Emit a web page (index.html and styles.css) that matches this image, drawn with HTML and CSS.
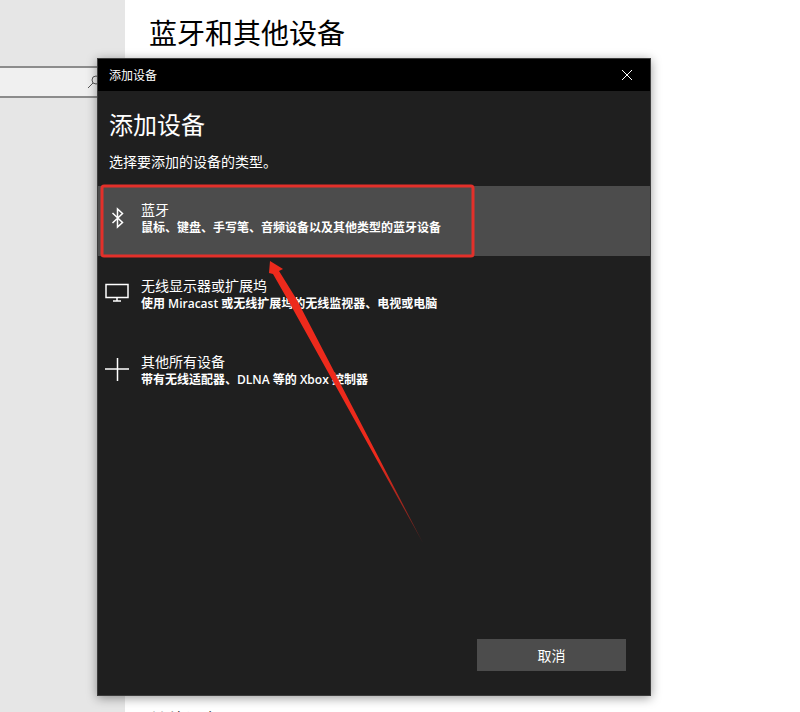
FILE: index.html
```html
<!DOCTYPE html>
<html lang="zh-CN">
<head>
    <meta charset="UTF-8">
    <title>蓝牙和其他设备</title>
    <link rel="stylesheet" href="styles.css">
</head>
<body>
    <div class="settings">
        <aside class="sidebar">
            <div class="search">
                <input type="text" class="search-input" aria-label="查找设置">
                <svg class="search-icon" width="16" height="16" viewBox="0 0 16 16">
                    <circle cx="9" cy="6" r="4"/>
                    <path d="M6 9L1 14"/>
                </svg>
            </div>
        </aside>
        <main class="content">
            <h1 class="page-title">蓝牙和其他设备</h1>
            <h2 class="section-title">其他设备</h2>
        </main>
    </div>

    <div class="dialog" role="dialog" aria-labelledby="dialog-title">
        <div class="titlebar">
            <span>添加设备</span>
            <button class="close" type="button" aria-label="关闭">
                <svg width="12" height="12" viewBox="0 0 12 12"><path d="M1 1L11 11M11 1L1 11"/></svg>
            </button>
        </div>
        <h2 class="dialog-title" id="dialog-title">添加设备</h2>
        <p class="dialog-text">选择要添加的设备的类型。</p>
        <div class="devices">
            <button class="device selected" type="button">
                <svg class="device-icon" width="24" height="24" viewBox="0 0 24 24">
                    <path d="M7.500 7L17.500 16.500L12.500 21V3L17.500 7.500L7.500 17"/>
                </svg>
                <span class="device-info">
                    <span class="device-name">蓝牙</span>
                    <span class="device-desc">鼠标、键盘、手写笔、音频设备以及其他类型的蓝牙设备</span>
                </span>
            </button>
            <button class="device" type="button">
                <svg class="device-icon" width="24" height="24" viewBox="0 0 24 24">
                    <path d="M1 2.500H23V15.500H1ZM12 15.500V19M8 19H16"/>
                </svg>
                <span class="device-info">
                    <span class="device-name">无线显示器或扩展坞</span>
                    <span class="device-desc">使用 Miracast 或无线扩展坞的无线监视器、电视或电脑</span>
                </span>
            </button>
            <button class="device" type="button">
                <svg class="device-icon" width="24" height="24" viewBox="0 0 24 24">
                    <path d="M12.500 0V23M0 11H24"/>
                </svg>
                <span class="device-info">
                    <span class="device-name">其他所有设备</span>
                    <span class="device-desc">带有无线适配器、DLNA 等的 Xbox 控制器</span>
                </span>
            </button>
            <!-- highlight box and arrow over the list -->
            <svg class="marker" width="380" height="370" viewBox="0 0 380 370">
                <defs>
                    <linearGradient id="fade" x1="0" y1="0" x2="0" y2="1">
                        <stop offset="0.7" stop-color="#ed2a1c"/>
                        <stop offset="1" stop-color="#ed2a1c" stop-opacity="0.3"/>
                    </linearGradient>
                </defs>
                <rect x="4" y="3" width="371" height="70" rx="2"/>
                <path fill="url(#fade)" d="M172 78L185 86L181 88L199 117L325 360L191 119L175 91L171 90Z"/>
            </svg>
        </div>
        <div class="actions">
            <button class="cancel" type="button">取消</button>
        </div>
    </div>
</body>
</html>
```

FILE: styles.css
```css
* {
    box-sizing: border-box;
}
body {
    margin: 0;
    font-family: "Open Sans", "Noto Sans CJK SC", sans-serif;
    font-size: 14px;
    color: #000;
    background: #fff;
}
h1, h2, p {
    margin: 0;
    font-weight: 400;
}
button {
    border: none;
    padding: 0;
    font: inherit;
    color: inherit;
    background: none;
}
.settings {
    display: flex;
    height: 100vh;
    overflow: hidden;
}
.sidebar {
    flex: none;
    width: 125px;
    padding-top: 66px;
    background: #e6e6e6;
}
.search {
    display: flex;
    align-items: center;
    height: 32px;
    padding-right: 22px;
    border: 2px solid #8c8c8c;
    border-width: 2px 0;
    background: #f0f0f0;
}
.search-input {
    flex: 1;
    min-width: 0;
    border: none;
    background: none;
}
.search-icon {
    flex: none;
    fill: none;
    stroke: #555;
}
.content {
    display: flex;
    flex: 1;
    flex-direction: column;
    gap: 655px;
    padding: 13px 24px 0;
}
.page-title {
    font-size: 28px;
    line-height: 40px;
}
.section-title {
    flex: none;
    font-size: 18px;
    line-height: 24px;
}
.dialog {
    position: absolute;
    top: 58px;
    right: 149px;
    bottom: 16px;
    left: 97px;
    display: flex;
    flex-direction: column;
    color: #fff;
    background: #1f1f1f;
    border: 1px solid #3c3c3c;
    box-shadow: 0 2px 10px rgba(0, 0, 0, 0.4);
}
.titlebar {
    display: flex;
    align-items: center;
    justify-content: space-between;
    height: 32px;
    padding-left: 11px;
    font-size: 12px;
    background: #000;
}
.close {
    display: flex;
    align-items: center;
    justify-content: center;
    width: 46px;
    height: 32px;
}
.close svg {
    fill: none;
    stroke: #fff;
}
.dialog-title {
    padding: 16px 11px 0;
    font-size: 24px;
    line-height: 36px;
}
.dialog-text {
    padding: 7px 11px 0;
    line-height: 24px;
}
.devices {
    position: relative;
    display: flex;
    flex-direction: column;
    gap: 6px;
    margin-top: 12px;
}
.device {
    display: flex;
    align-items: center;
    gap: 12px;
    height: 70px;
    padding: 0 7px 6px;
    text-align: left;
}
.selected {
    background: #4c4c4c;
}
.device-icon {
    flex: none;
    fill: none;
    stroke: #fff;
    stroke-width: 1.5;
}
.device-info {
    display: flex;
    flex-direction: column;
}
.device-name {
    line-height: 18px;
}
.device-desc {
    font-size: 12px;
    font-weight: 600;
    line-height: 17px;
}
.marker {
    position: absolute;
    top: -3px;
    left: 0;
    pointer-events: none;
}
.marker rect {
    fill: none;
    stroke: #e3302a;
    stroke-width: 3;
}
.actions {
    display: flex;
    justify-content: flex-end;
    margin-top: auto;
    padding: 0 24px 24px;
}
.cancel {
    width: 149px;
    height: 32px;
    background: #4c4c4c;
}
```
